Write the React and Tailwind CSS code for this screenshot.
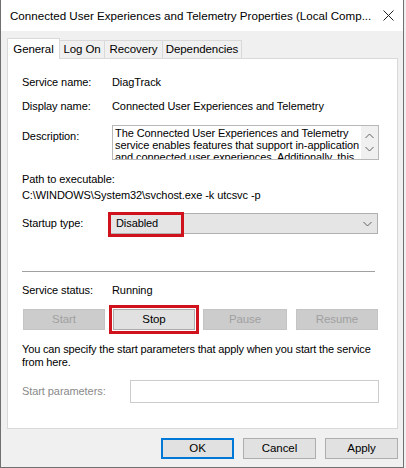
import React from "react";

const font = { fontFamily: '"Liberation Sans", Arial, sans-serif' };

function Chevron({ up = false, className = "" }) {
  return (
    <svg width="9" height="6" viewBox="0 0 9 6" className={className}>
      <polyline
        points={up ? "0.5,5 4.5,1 8.5,5" : "0.5,1 4.5,5 8.5,1"}
        fill="none"
        stroke="#606060"
        strokeWidth="1"
      />
    </svg>
  );
}

function Tab({ label, active, w }) {
  if (active) {
    return (
      <div
        className={`${w} h-[21px] bg-white border border-b-0 border-[#d9d9d9] flex items-center justify-center relative z-10 -mb-px text-[11.5px]`}
      >
        {label}
      </div>
    );
  }
  return (
    <div
      className={`${w} h-[18px] bg-[#f0f0f0] border border-l-0 border-b-0 border-[#d9d9d9] flex items-center justify-center text-[11.5px]`}
    >
      {label}
    </div>
  );
}

function Btn({ children, disabled, w = "w-[82px]", className = "" }) {
  return (
    <div
      className={`${w} h-[21px] flex items-center justify-center border text-[11.5px] ${
        disabled
          ? "bg-[#cccccc] border-[#c4c4c4] text-[#a0a0a0]"
          : "bg-[#e1e1e1] border-[#adadad] text-black"
      } ${className}`}
    >
      {children}
    </div>
  );
}

export default function App() {
  return (
    <div
      style={font}
      className="w-[406px] h-[468px] bg-[#f0f0f0] text-[11px] tracking-[-0.08px] text-black leading-[15px] overflow-hidden"
    >
      <div className="w-[404px] h-[468px] border-x border-b border-[#707070] flex flex-col">
        {/* title bar */}
        <div className="h-[31px] bg-white flex items-center justify-between pl-[9px] pr-[9px]">
          <span className="text-[11.6px] tracking-normal whitespace-nowrap">
            Connected User Experiences and Telemetry Properties (Local Comp...
          </span>
          <svg width="11" height="11" viewBox="0 0 11 11">
            <path d="M0.5 0.5 L10.5 10.5 M10.5 0.5 L0.5 10.5" stroke="#222" strokeWidth="1" />
          </svg>
        </div>

        {/* tabs */}
        <div className="pl-[6px] pt-[7px] flex items-end">
          <Tab label="General" active w="w-[53px]" />
          <Tab label="Log On" w="w-[45px]" />
          <Tab label="Recovery" w="w-[58px]" />
          <Tab label="Dependencies" w="w-[79px]" />
        </div>

        {/* panel */}
        <div className="ml-[6px] w-[391px] h-[371px] bg-white border border-[#d9d9d9] pl-[14px] pr-[18px] flex flex-col">
          <div className="mt-[15px] h-[16px] flex items-center">
            <span className="w-[90px]">Service name:</span>
            <span>DiagTrack</span>
          </div>
          <div className="mt-[8px] h-[16px] flex items-center">
            <span className="w-[90px]">Display name:</span>
            <span>Connected User Experiences and Telemetry</span>
          </div>

          <div className="mt-[11px] h-[35px] flex items-start">
            <span className="w-[90px] pt-[4px]">Description:</span>
            <div className="w-[267px] h-[35px] border border-[#b8b8b8] flex overflow-hidden">
              <div className="flex-1 pl-[2px] pt-[1px] leading-[12px] whitespace-nowrap overflow-hidden">
                <div>The Connected User Experiences and Telemetry</div>
                <div>service enables features that support in-application</div>
                <div>and connected user experiences. Additionally, this</div>
              </div>
              <div className="w-[17px] bg-[#f0f0f0] flex flex-col items-center justify-between py-[7px]">
                <Chevron up />
                <Chevron />
              </div>
            </div>
          </div>

          <div className="mt-[11px] h-[16px] flex items-center">Path to executable:</div>
          <div className="h-[16px] flex items-center">C:\WINDOWS\System32\svchost.exe -k utcsvc -p</div>

          <div className="mt-[8px] h-[25px] flex items-center">
            <span className="w-[88px]">Startup type:</span>
            <div className="relative w-[268px] h-[21px] bg-[#e5e5e5] border border-[#b0b0b0] flex items-center justify-between pl-[5px] pr-[5px]">
              <span>Disabled</span>
              <Chevron />
              <div className="absolute -left-[3px] -top-[2px] w-[76px] h-[25px] border-[3px] border-[#d0121d]" />
            </div>
          </div>

          <div className="mt-[35px] h-px bg-[#a0a0a0] w-[353px]" />

          <div className="mt-[10px] h-[16px] flex items-center">
            <span className="w-[90px]">Service status:</span>
            <span>Running</span>
          </div>

          <div className="mt-[7px] h-[28px] flex items-center">
            <Btn disabled className="ml-[1px]">Start</Btn>
            <div className="ml-[4px] border-[3px] border-[#d0121d] p-px">
              <Btn>Stop</Btn>
            </div>
            <Btn disabled w="w-[84px]" className="ml-[4px]">Pause</Btn>
            <Btn disabled className="ml-[9px]">Resume</Btn>
          </div>

          <div className="mt-[10px] leading-[13px] tracking-[-0.15px]">
            <div className="whitespace-nowrap">You can specify the start parameters that apply when you start the service</div>
            <div>from here.</div>
          </div>

          <div className="mt-[11px] h-[23px] flex items-center">
            <span className="w-[108px] text-[#8a8a8a]">Start parameters:</span>
            <div className="w-[249px] h-[23px] bg-white border border-[#cccccc]" />
          </div>
        </div>

        {/* footer */}
        <div className="mt-[9px] flex justify-end gap-[9px] pr-[5px]">
          <Btn w="w-[73px]" className="!border-2 !border-[#0078d7]">OK</Btn>
          <Btn w="w-[73px]">Cancel</Btn>
          <Btn w="w-[73px]">Apply</Btn>
        </div>
      </div>
    </div>
  );
}
